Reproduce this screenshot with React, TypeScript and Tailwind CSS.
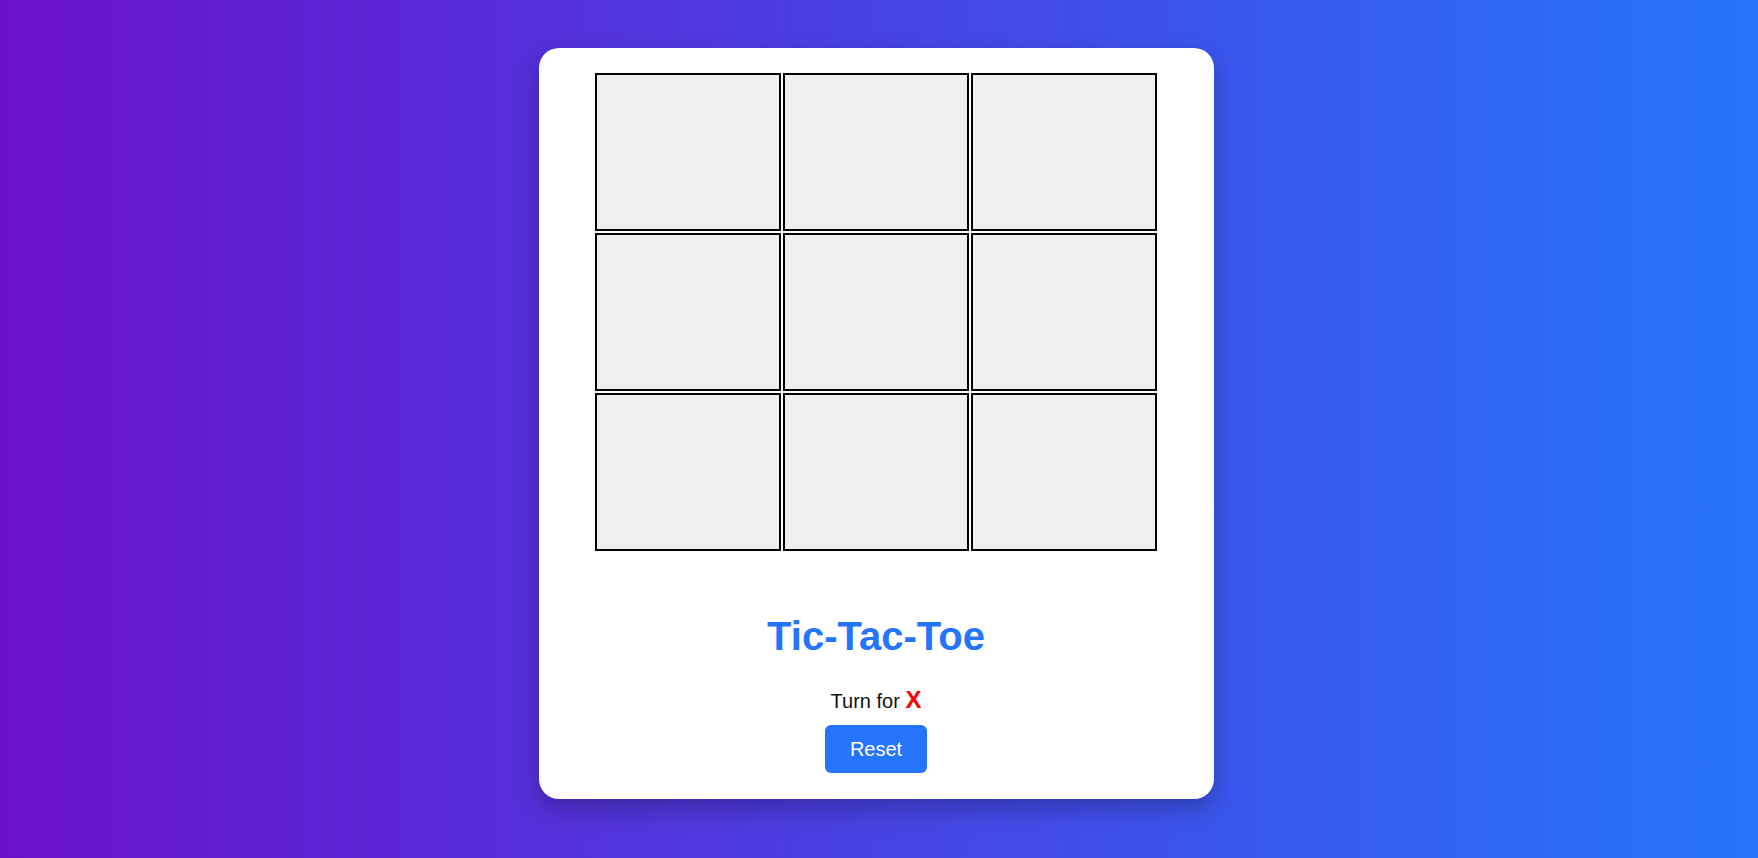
import React, { useState } from 'react';

type Cell = 'X' | 'O' | null;

export default function App() {
  const [cells, setCells] = useState<Cell[]>(Array(9).fill(null));
  const [turn, setTurn] = useState<'X' | 'O'>('X');

  const play = (i: number) => {
    if (cells[i]) return;
    const next = [...cells];
    next[i] = turn;
    setCells(next);
    setTurn(turn === 'X' ? 'O' : 'X');
  };

  const reset = () => {
    setCells(Array(9).fill(null));
    setTurn('X');
  };

  return (
    <div
      className="min-h-screen w-full flex justify-center pt-[48px] pr-[6px] bg-[linear-gradient(to_right,#6a11cb,#2575fc)]"
      style={{ fontFamily: '"Liberation Sans", Arial, sans-serif' }}
    >
      <div className="w-[675px] h-[751px] bg-white rounded-[20px] shadow-[0_10px_25px_rgba(0,0,0,0.25)] flex flex-col items-center pt-[25px]">
        <div className="grid grid-cols-[repeat(3,186px)] grid-rows-[repeat(3,158px)] gap-[2px]">
          {cells.map((c, i) => (
            <button
              key={i}
              onClick={() => play(i)}
              className="bg-[#efefef] border-2 border-black text-6xl font-bold"
            >
              <span className={c === 'X' ? 'text-[#ff0000]' : 'text-[#2575fc]'}>{c}</span>
            </button>
          ))}
        </div>

        <h1 className="mt-[63px] text-[40px] leading-[45px] font-bold text-[#2575fc]">Tic-Tac-Toe</h1>

        <p className="mt-[27px] text-[20px] leading-[28px] text-[#111]">
          Turn for <span className="text-[24px] font-bold text-[#ff0000]">{turn}</span>
        </p>

        <button
          onClick={reset}
          className="mt-[10px] h-[48px] w-[102px] rounded-[6px] bg-[#2575fc] text-white text-[20px]"
        >
          Reset
        </button>
      </div>
    </div>
  );
}
